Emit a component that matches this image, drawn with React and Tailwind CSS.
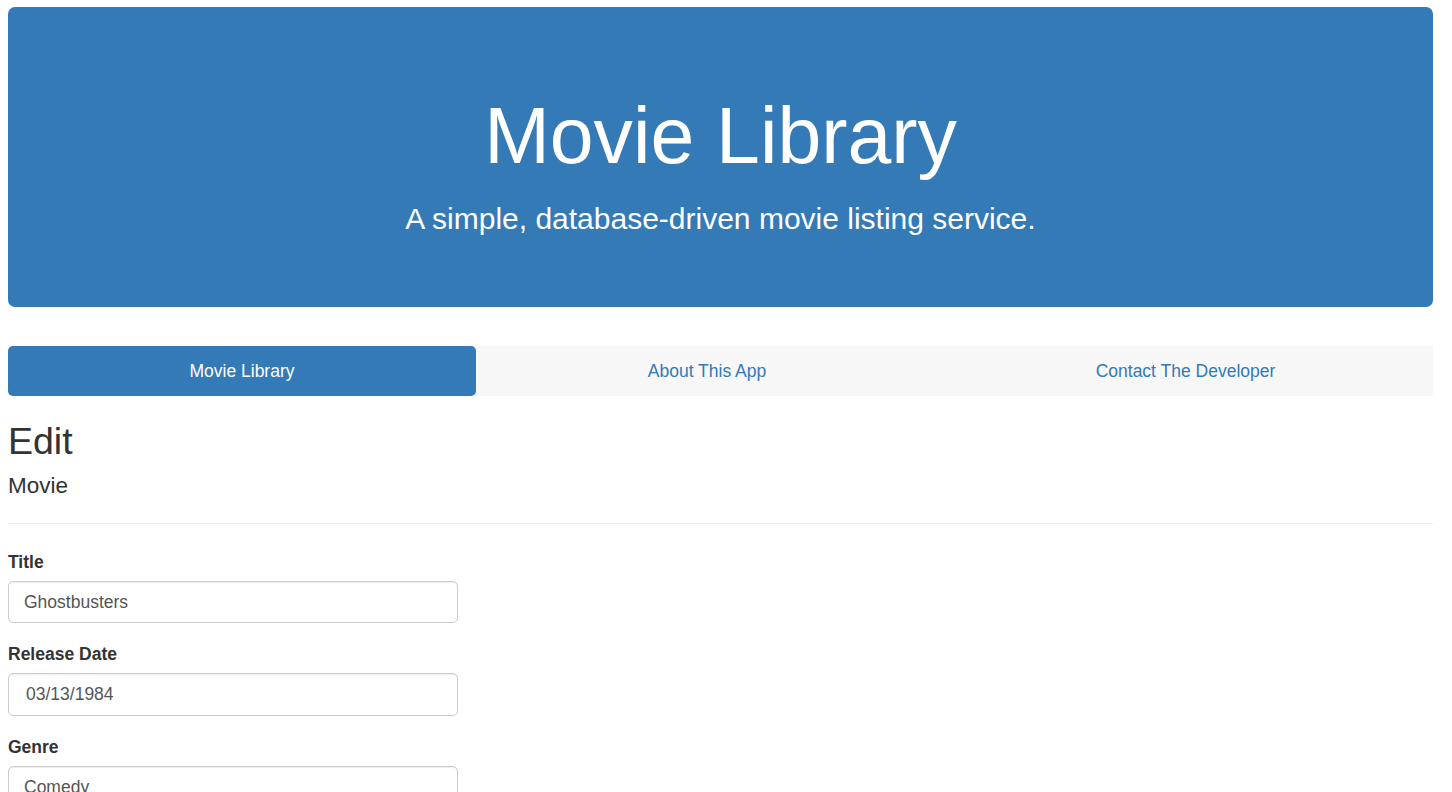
const Field = ({ label, value, pl = "pl-[15px]" }) => (
  <div className="mb-[18.75px]">
    <label className="block mb-[6.25px] font-bold text-[17.5px] leading-[25px] text-[#333]">
      {label}
    </label>
    <input
      type="text"
      defaultValue={value}
      className={`block w-[450px] h-[42.5px] ${pl} pr-[15px] border border-[#ccc] rounded-[5px] text-[17.5px] text-[#555] bg-white shadow-[inset_0_1px_1px_rgba(0,0,0,0.075)] outline-none`}
    />
  </div>
);

const App = () => {
  return (
    <div className="min-h-screen bg-white font-['Liberation_Sans',Arial,sans-serif] text-[#333] px-[8px] pt-[7px]">
      <div className="w-[1425px]">
        <header className="h-[300px] rounded-[7px] bg-[#337ab7] text-white flex flex-col items-center pt-[86px]">
          <h1 className="text-[78.75px] leading-[1.1]">Movie Library</h1>
          <p className="text-[30px] leading-[1.4] mt-[18px]">
            A simple, database-driven movie listing service.
          </p>
        </header>

        <nav className="mt-[39px] flex h-[50px] bg-[#f7f7f7] text-[17.5px]">
          <a className="w-[468px] flex items-center justify-center rounded-[5px] bg-[#337ab7] text-white">
            Movie Library
          </a>
          <a className="w-[462px] flex items-center justify-center text-[#337ab7]">
            About This App
          </a>
          <a className="flex-1 flex items-center justify-center text-[#337ab7]">
            Contact The Developer
          </a>
        </nav>

        <main>
          <h2 className="mt-[25px] text-[37.5px] leading-[1.1] font-normal">Edit</h2>
          <h4 className="mt-[11.5px] text-[22.5px] leading-[1.1] font-normal">Movie</h4>
          <hr className="mt-[24px] mb-[26px] border-0 border-t border-[#eee]" />

          <form>
            <Field label="Title" value="Ghostbusters" />
            <Field label="Release Date" value="03/13/1984" pl="pl-[17px]" />
            <Field label="Genre" value="Comedy" />
            <Field label="Price" value="5.99" />
          </form>
        </main>
      </div>
    </div>
  );
};

export default App;
